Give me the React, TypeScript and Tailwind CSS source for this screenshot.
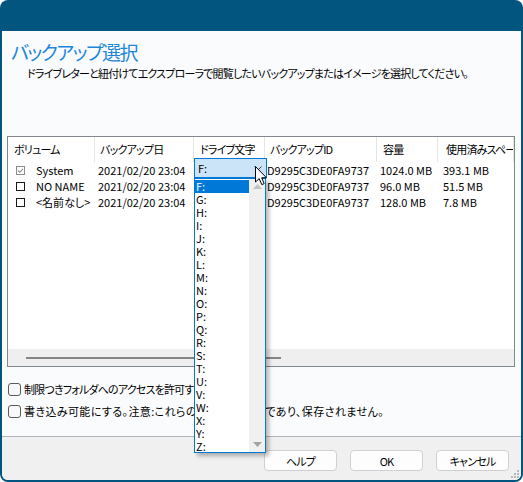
import React from 'react';

const FONT = "[font-family:'Noto_Sans_CJK_JP','Noto_Sans',sans-serif] [font-feature-settings:'palt']";
const JP = 'tracking-[-0.8px]';

const columns = [
  { label: 'ボリューム', width: 'w-[87px]', pad: 'pl-[6px]' },
  { label: 'バックアップ日', width: 'w-[99px]', pad: 'pl-[5px]' },
  { label: 'ドライブ文字', width: 'w-[71px]', pad: 'pl-[6px]' },
  { label: 'バックアップID', width: 'w-[112px]', pad: 'pl-[5px]' },
  { label: '容量', width: 'w-[61px]', pad: 'pl-[6px]' },
  { label: '使用済みスペース', width: 'flex-1', pad: 'pl-[8px]' },
];

const rows = [
  { name: 'System', checked: true, date: '2021/02/20 23:04', id: 'D9295C3DE0FA9737', size: '1024.0 MB', used: '393.1 MB' },
  { name: 'NO NAME', checked: false, date: '2021/02/20 23:04', id: 'D9295C3DE0FA9737', size: '96.0 MB', used: '51.5 MB' },
  { name: '<名前なし>', checked: false, date: '2021/02/20 23:04', id: 'D9295C3DE0FA9737', size: '128.0 MB', used: '7.8 MB' },
];

const letters = ['F', 'G', 'H', 'I', 'J', 'K', 'L', 'M', 'N', 'O', 'P', 'Q', 'R', 'S', 'T', 'U', 'V', 'W', 'X', 'Y', 'Z'];

const ListCheck: React.FC<{ checked: boolean }> = ({ checked }) =>
  checked ? (
    <svg width="9" height="9" viewBox="0 0 9 9" className="shrink-0">
      <rect x="0.5" y="0.5" width="8" height="8" fill="white" stroke="#8c8c8c" />
      <path d="M2 4.5 L3.8 6.3 L7 2.8" fill="none" stroke="#8c8c8c" strokeWidth="1.1" />
    </svg>
  ) : (
    <svg width="9" height="9" viewBox="0 0 9 9" className="shrink-0">
      <rect x="0.5" y="0.5" width="8" height="8" fill="white" stroke="#1a1a1a" />
    </svg>
  );

const Option: React.FC<{ children: React.ReactNode; tracking: string }> = ({ children, tracking }) => (
  <div className="flex h-[22px] items-center pl-[6px]">
    <div className="h-[13px] w-[13px] shrink-0 rounded-[3px] border border-[#5a5a5a] bg-[#f8f8f8]" />
    <span className={`whitespace-nowrap pl-[3px] leading-[16px] ${tracking}`}>{children}</span>
  </div>
);

const Button: React.FC<{ children: React.ReactNode }> = ({ children }) => (
  <button className={`flex h-[21px] w-[73px] items-center justify-center rounded-[4px] border border-[#d0d0d0] bg-[#fdfdfd] leading-[16px] text-black ${JP}`}>
    {children}
  </button>
);

export default function App() {
  return (
    <div className="h-[482px] w-[523px] bg-white">
      <div className={`flex h-full flex-col overflow-hidden rounded-[8px] bg-[#01557f] text-[11px] text-black ${FONT}`}>
        {/* title bar */}
        <div className="h-[31px] shrink-0" />

        <div className="relative mx-[2px] mb-[2px] flex flex-1 flex-col overflow-hidden rounded-b-[6px] bg-[#fafbfd]">
          <div className="pl-[9px] pt-[8px] text-[19px] leading-[26px] tracking-[-1.5px] text-[#1c87db]">バックアップ選択</div>
          <div className={`whitespace-nowrap pl-[25px] leading-[16px] ${JP}`}>
            ドライブレターと紐付けてエクスプローラで閲覧したいバックアップまたはイメージを選択してください。
          </div>

          {/* list view */}
          <div className="ml-[5px] mr-[6px] mt-[55px] flex h-[231px] flex-col overflow-hidden border border-[#828790] bg-white">
            <div className="flex h-[25px] shrink-0">
              {columns.map((c) => (
                <div
                  key={c.label}
                  className={`${c.width} ${c.pad} ${JP} flex shrink-0 items-center overflow-hidden whitespace-nowrap border-r border-[#e5e5e5] pb-[2px] leading-[16px]`}
                >
                  {c.label}
                </div>
              ))}
            </div>
            {rows.map((r) => (
              <div key={r.name} className="flex h-[16px] shrink-0 items-center whitespace-nowrap leading-[16px]">
                <div className="flex w-[87px] shrink-0 items-center pl-[8px]">
                  <ListCheck checked={r.checked} />
                  <span className="pl-[11px]">{r.name}</span>
                </div>
                <div className="w-[99px] shrink-0 pl-[3px]">{r.date}</div>
                <div className="w-[71px] shrink-0 pl-[4px]">F:</div>
                <div className="w-[112px] shrink-0 pl-[2px]">{r.id}</div>
                <div className="w-[61px] shrink-0 pl-[3px]">{r.size}</div>
                <div className="flex-1 pl-[5px]">{r.used}</div>
              </div>
            ))}
            <div className="flex-1" />
            <div className="flex h-[17px] shrink-0 items-center bg-[#efefef] pl-[18px]">
              <div className="h-[2px] w-[255px] bg-[#858585]" />
            </div>
          </div>

          <div className="mt-[11px]">
            <Option tracking="tracking-[-0.8px]">制限つきフォルダへのアクセスを許可する</Option>
            <Option tracking="tracking-[0.4px]">書き込み可能にする。注意:これらの変更は一時的であり、保存されません。</Option>
          </div>

          <div className="relative mt-auto flex h-[44px] shrink-0 justify-end gap-[13px] border-t border-[#b4b4b4] bg-[#f0f0f0] pr-[12px] pt-[13px]">
            <Button>ヘルプ</Button>
            <Button>OK</Button>
            <Button>キャンセル</Button>
            <svg width="8" height="8" viewBox="0 0 8 8" className="absolute bottom-[2px] right-[2px]">
              <rect x="6" y="0" width="2" height="2" fill="#b8b8b8" />
              <rect x="3" y="3" width="2" height="2" fill="#b8b8b8" />
              <rect x="6" y="3" width="2" height="2" fill="#b8b8b8" />
              <rect x="0" y="6" width="2" height="2" fill="#b8b8b8" />
              <rect x="3" y="6" width="2" height="2" fill="#b8b8b8" />
              <rect x="6" y="6" width="2" height="2" fill="#b8b8b8" />
            </svg>
          </div>

          {/* drive letter combobox (open) */}
          <div className="absolute left-[192px] top-[127px] flex h-[20px] w-[73px] items-center border border-[#0078d7] bg-[#cce4f7] pl-[3px] leading-[16px]">
            F:
            <svg width="8" height="5" viewBox="0 0 8 5" className="absolute right-[4px] top-[7px]">
              <path d="M0.5 0.5 L4 4 L7.5 0.5" fill="none" stroke="#3a3a3a" strokeWidth="1" />
            </svg>
          </div>
          <div className="absolute left-[192px] top-[147px] flex h-[275px] w-[72px] border border-[#0078d7] bg-white shadow-[3px_3px_4px_rgba(0,0,0,0.28)]">
            <div className="flex-1 pt-[1px]">
              {letters.map((l, i) => (
                <div
                  key={l}
                  className={
                    i === 0
                      ? 'flex h-[13px] items-center bg-[#0078d7] pl-[1px] leading-[13px] text-white'
                      : 'flex h-[13px] items-center pl-[1px] leading-[13px]'
                  }
                >
                  {l}:
                </div>
              ))}
            </div>
            <div className="flex w-[16px] flex-col items-center justify-between bg-[#f0f0f0] py-[5px]">
              <svg width="9" height="5" viewBox="0 0 9 5">
                <path d="M0 5 L4.5 0 L9 5 Z" fill="#c2c2c2" />
              </svg>
              <svg width="9" height="5" viewBox="0 0 9 5">
                <path d="M0 0 L9 0 L4.5 5 Z" fill="#a3a3a3" />
              </svg>
            </div>
          </div>

          {/* mouse pointer */}
          <svg width="13" height="20" viewBox="0 0 13 20" className="absolute left-[253px] top-[135px]">
            <path
              d="M0.5 0.5 L0.5 16 L4.2 12.6 L6.8 18.6 L9.2 17.6 L6.7 11.8 L11.5 11.8 Z"
              fill="white"
              stroke="black"
              strokeWidth="1"
              strokeLinejoin="round"
            />
          </svg>
        </div>
      </div>
    </div>
  );
}
